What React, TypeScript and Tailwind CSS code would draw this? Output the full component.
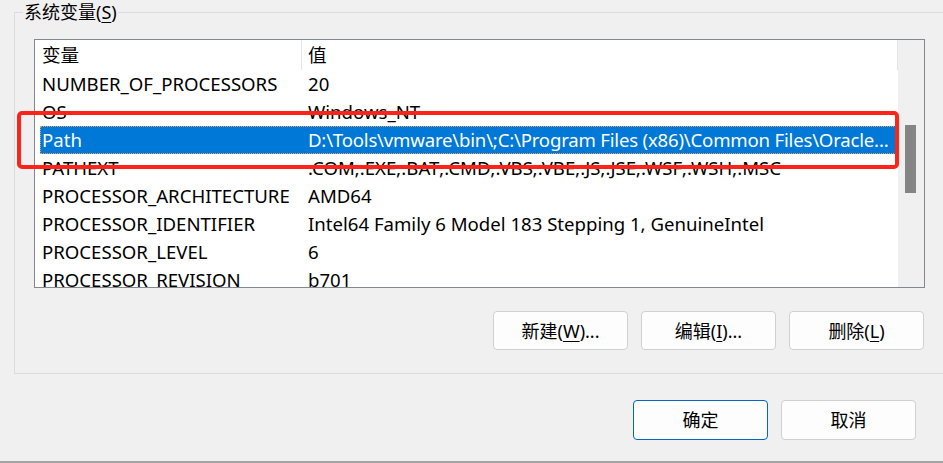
import React from "react";

const rows: { name: string; value: string; selected?: boolean }[] = [
  { name: "NUMBER_OF_PROCESSORS", value: "20" },
  { name: "OS", value: "Windows_NT" },
  {
    name: "Path",
    value: "D:\\Tools\\vmware\\bin\\;C:\\Program Files (x86)\\Common Files\\Oracle...",
    selected: true,
  },
  { name: "PATHEXT", value: ".COM;.EXE;.BAT;.CMD;.VBS;.VBE;.JS;.JSE;.WSF;.WSH;.MSC" },
  { name: "PROCESSOR_ARCHITECTURE", value: "AMD64" },
  { name: "PROCESSOR_IDENTIFIER", value: "Intel64 Family 6 Model 183 Stepping 1, GenuineIntel" },
  { name: "PROCESSOR_LEVEL", value: "6" },
  { name: "PROCESSOR_REVISION", value: "b701" },
];

function Btn({ children, focused, h }: { children: React.ReactNode; focused?: boolean; h?: "a" | "b" }) {
  const height = h === "b" ? "h-[39px]" : "h-[40px]";
  return (
    <button
      className={
        (focused
          ? "w-[135px] rounded-[4px] border border-[#0067c0] bg-[#fdfdfd] text-[18px] leading-none text-black flex items-center justify-center "
          : "w-[135px] rounded-[4px] border border-[#d0d0d0] bg-[#fdfdfd] text-[18px] leading-none text-black flex items-center justify-center ") +
        height
      }
    >
      {children}
    </button>
  );
}

export default function App() {
  return (
    <div
      className="relative w-[943px] h-[463px] overflow-hidden bg-[#f0f0f0] flex flex-col text-black"
      style={{ fontFamily: '"Noto Sans", "Noto Sans CJK SC", sans-serif' }}
    >
      {/* group box */}
      <div className="pt-[12px] pl-[14px]">
        <div className="w-[960px] border border-[#dcdcdc] flex flex-col">
          <div className="-mt-[13px] ml-[8px] h-[24px] flex items-center self-start px-[1px] bg-[#f0f0f0] text-[18px] leading-[24px]">
            系统变量(<span className="underline underline-offset-[3px]">S</span>)
          </div>
          <div className="mt-[15px] ml-[19px] w-[891px] h-[249px] border border-[#828790] bg-white flex">
            <div className="w-[863px] flex flex-col overflow-hidden text-[18.6px]">
              <div className="h-[30px] flex shrink-0 border-r border-[#e5e5e5]">
                <div className="w-[266px] pl-[7px] flex items-center">变量</div>
                <div className="w-px h-[30px] bg-[#e5e5e5]" />
                <div className="flex-1 pl-[6px] flex items-center">值</div>
              </div>
              {rows.map((r) => (
                <div key={r.name} className="h-[28px] shrink-0 pl-[5px] pr-[2px] flex">
                  <div
                    className={
                      r.selected
                        ? "flex-1 flex items-center bg-[#0078d7] text-white outline outline-1 outline-dotted outline-[#e0a45c] -outline-offset-1"
                        : "flex-1 flex items-center"
                    }
                  >
                    <div className="w-[261px] shrink-0 pl-[2px] whitespace-nowrap">{r.name}</div>
                    <div
                      className={
                        r.selected
                          ? "flex-1 min-w-0 pl-[7px] whitespace-nowrap tracking-[-0.2px]"
                          : "flex-1 min-w-0 pl-[7px] whitespace-nowrap overflow-hidden"
                      }
                    >
                      {r.value}
                    </div>
                  </div>
                </div>
              ))}
            </div>
            <div className="w-[26px] bg-[#f0f0f0] pt-[85px] pl-[7px]">
              <div className="w-[11px] h-[68px] bg-[#858585]" />
            </div>
          </div>
          <div className="mt-[23px] mb-[23px] w-[909px] flex justify-end gap-[13px]">
            <Btn h="b">
              新建(<span className="underline underline-offset-[3px]">W</span>)...
            </Btn>
            <Btn h="b">
              编辑(<span className="underline underline-offset-[3px]">I</span>)...
            </Btn>
            <Btn h="b">
              删除(<span className="underline underline-offset-[3px]">L</span>)
            </Btn>
          </div>
        </div>
      </div>

      {/* OK / Cancel */}
      <div className="mt-[26px] pr-[27px] flex justify-end gap-[13px]">
        <Btn focused>确定</Btn>
        <Btn>取消</Btn>
      </div>

      <div className="flex-1" />
      <div className="h-[2px] bg-[#a3a3a3]" />

      {/* red annotation */}
      <div className="absolute left-[17px] top-[111px] w-[882px] h-[58px] rounded-[5px] border-[4px] border-[#ff2419]" />
    </div>
  );
}
